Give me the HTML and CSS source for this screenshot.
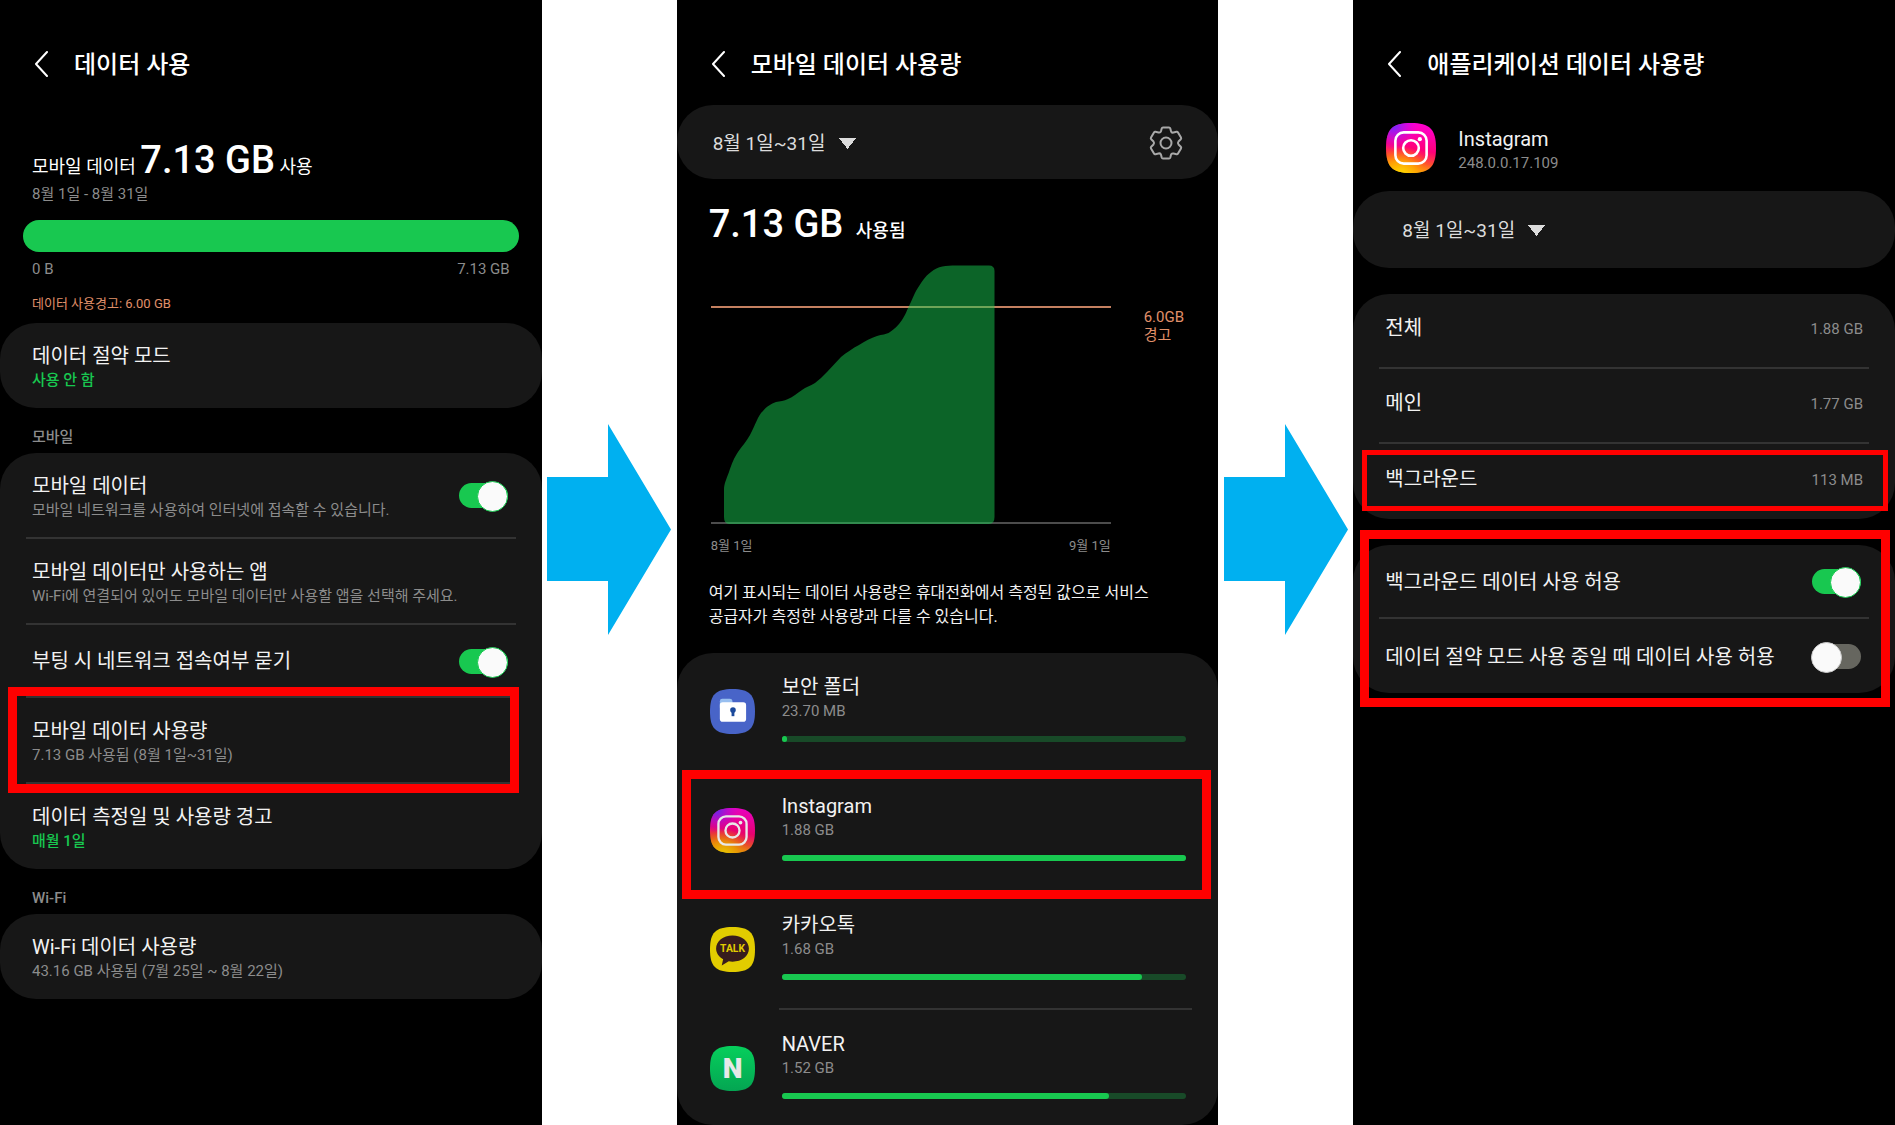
FILE: index.html
```html
<!DOCTYPE html>
<html lang="ko">
<head>
    <meta charset="UTF-8">
    <meta name="viewport" content="width=device-width, initial-scale=1.0">
    <title>데이터 사용</title>
    <link rel="stylesheet" href="styles.css">
</head>
<body>
    <!-- shared icons -->
    <svg class="defs" width="0" height="0" aria-hidden="true">
        <defs>
            <linearGradient id="insta-base" x1="0.6" y1="0" x2="0.4" y2="1">
                <stop offset="0" stop-color="#ff00d0"/>
                <stop offset="0.5" stop-color="#ff0078"/>
                <stop offset="0.75" stop-color="#ff5030"/>
                <stop offset="1" stop-color="#ffd000"/>
            </linearGradient>
            <radialGradient id="insta-purple" cx="0.15" cy="0.05" r="0.5">
                <stop offset="0" stop-color="#6a2cff"/>
                <stop offset="1" stop-color="#d800ff" stop-opacity="0"/>
            </radialGradient>
            <radialGradient id="insta-yellow" cx="0.3" cy="1.05" r="0.6">
                <stop offset="0" stop-color="#ffe000"/>
                <stop offset="0.5" stop-color="#ffa800" stop-opacity="0.8"/>
                <stop offset="1" stop-color="#ff6a00" stop-opacity="0"/>
            </radialGradient>
            <linearGradient id="naver-base" x1="0" y1="0" x2="0" y2="1">
                <stop offset="0" stop-color="#06cf5c"/>
                <stop offset="1" stop-color="#04a552"/>
            </linearGradient>
            <path id="squircle" d="M24 0C42 0 48 6 48 24S42 48 24 48 0 42 0 24 6 0 24 0Z"/>
        </defs>
        <symbol id="icon-back" viewBox="0 0 14 26">
            <path d="M13 1 2 13l11 12" fill="none" stroke="#fff" stroke-width="2" stroke-linecap="round" stroke-linejoin="round"/>
        </symbol>
        <symbol id="icon-insta" viewBox="0 0 48 48">
            <use href="#squircle" fill="url(#insta-base)"/>
            <use href="#squircle" fill="url(#insta-yellow)"/>
            <use href="#squircle" fill="url(#insta-purple)"/>
            <g fill="none" stroke="#fff" stroke-width="2.500">
                <rect x="9" y="9" width="30" height="30" rx="8"/>
                <circle cx="24" cy="24" r="7.500"/>
            </g>
            <circle cx="32.5" cy="15.5" r="2" fill="#fff"/>
        </symbol>
        <symbol id="icon-arrow" viewBox="0 0 124 211">
            <path d="M0 53H61V0L124 105.500 61 211V157H0Z" fill="#00b0f0"/>
        </symbol>
    </svg>

    <main class="steps">
        <section class="phone">
            <header class="top">
                <button class="back" aria-label="뒤로"><svg><use href="#icon-back"/></svg></button>
                <h1>데이터 사용</h1>
            </header>

            <div class="summary">
                <p class="total">모바일 데이터 <strong>7.13 GB</strong> 사용</p>
                <p class="sub">8월 1일 - 8월 31일</p>
                <div class="usage-bar"></div>
                <p class="scale sub"><span>0 B</span><span>7.13 GB</span></p>
                <p class="warning">데이터 사용경고: 6.00 GB</p>
            </div>

            <div class="card">
                <div class="row">
                    <div>
                        <h3>데이터 절약 모드</h3>
                        <p class="sub green">사용 안 함</p>
                    </div>
                </div>
            </div>

            <h2>모바일</h2>
            <div class="card">
                <div class="row">
                    <div>
                        <h3><label for="mobile-data">모바일 데이터</label></h3>
                        <p class="sub">모바일 네트워크를 사용하여 인터넷에 접속할 수 있습니다.</p>
                    </div>
                    <input type="checkbox" class="toggle" id="mobile-data" checked>
                </div>
                <div class="row">
                    <div>
                        <h3>모바일 데이터만 사용하는 앱</h3>
                        <p class="sub">Wi-Fi에 연결되어 있어도 모바일 데이터만 사용할 앱을 선택해 주세요.</p>
                    </div>
                </div>
                <div class="row single">
                    <h3><label for="boot-ask">부팅 시 네트워크 접속여부 묻기</label></h3>
                    <input type="checkbox" class="toggle" id="boot-ask" checked>
                </div>
                <div class="row mark mark-usage">
                    <div>
                        <h3>모바일 데이터 사용량</h3>
                        <p class="sub">7.13 GB 사용됨 (8월 1일~31일)</p>
                    </div>
                </div>
                <div class="row">
                    <div>
                        <h3>데이터 측정일 및 사용량 경고</h3>
                        <p class="sub green">매월 1일</p>
                    </div>
                </div>
            </div>

            <h2>Wi-Fi</h2>
            <div class="card">
                <div class="row">
                    <div>
                        <h3>Wi-Fi 데이터 사용량</h3>
                        <p class="sub">43.16 GB 사용됨 (7월 25일 ~ 8월 22일)</p>
                    </div>
                </div>
            </div>
        </section>

        <div class="next"><svg><use href="#icon-arrow"/></svg></div>

        <section class="phone">
            <header class="top">
                <button class="back" aria-label="뒤로"><svg><use href="#icon-back"/></svg></button>
                <h1>모바일 데이터 사용량</h1>
            </header>

            <div class="card period">
                <select aria-label="기간">
                    <option>8월 1일~31일</option>
                </select>
                <button class="settings" aria-label="설정">
                    <svg viewBox="-17 -17 34 34" fill="none" stroke="#a8a8a8" stroke-width="2" stroke-linejoin="round">
                        <path d="M-3-15.500H3Q4-15.500 4.300-14.500L5-11.800Q5.500-10 7.500-10.500L10.500-11.300Q11.500-11.500 12-10.600L15-5.400Q15.500-4.500 14.800-3.800L12.500-1.500Q11.300 0 12.500 1.500L14.800 3.800Q15.500 4.500 15 5.400L12 10.600Q11.500 11.500 10.500 11.300L7.500 10.500Q5.500 10 5 11.800L4.300 14.500Q4 15.500 3 15.500H-3Q-4 15.500-4.300 14.500L-5 11.800Q-5.500 10-7.500 10.500L-10.500 11.300Q-11.500 11.500-12 10.600L-15 5.400Q-15.500 4.500-14.800 3.800L-12.500 1.500Q-11.300 0-12.500-1.500L-14.800-3.800Q-15.500-4.500-15-5.400L-12-10.600Q-11.500-11.500-10.500-11.300L-7.500-10.500Q-5.500-10-5-11.800L-4.300-14.500Q-4-15.500-3-15.500Z"/>
                        <circle r="5.500"/>
                    </svg>
                </button>
            </div>

            <p class="total used"><strong>7.13 GB</strong> <b>사용됨</b></p>

            <div class="chart">
                <div class="plot">
                    <svg viewBox="0 0 400 260" preserveAspectRatio="none">
                        <path d="M0 42H400" stroke="#c48060" stroke-width="2"/>
                        <path d="M0 258H400" stroke="#666" stroke-width="1.500"/>
                        <path fill="#18c850" fill-opacity="0.5" d="M13 225C13 219 15 215 18 207C21 198 23 193 27 187C31 181 35 177 39 170C44 161 47 150 52 146C56 141 60 139 65 137C69 136 73 136 77 134C82 132 86 128 91 125C95 122 99 121 104 118C108 115 112 111 116 107L130 92C135 88 142 83 148 80C154 76 160 73 166 71C171 69 175 70 179 67C183 64 187 61 191 55C195 49 196 45 198 41C201 35 202 32 205 26C210 18 214 11 220 7C227 1 235 0.500 245 0.500H278Q283.500 0.500 283.500 6V252Q283.500 259 278 259H18Q13 259 13 252Z"/>
                    </svg>
                    <p class="axis"><span>8월 1일</span><span>9월 1일</span></p>
                </div>
                <p class="limit">6.0GB<br>경고</p>
            </div>

            <p class="note">여기 표시되는 데이터 사용량은 휴대전화에서 측정된 값으로 서비스<br>공급자가 측정한 사용량과 다를 수 있습니다.</p>

            <ul class="card apps">
                <li class="app">
                    <svg class="app-icon" viewBox="0 0 48 48">
                        <use href="#squircle" fill="#4864c8"/>
                        <path d="M10.500 20V13Q10.500 10.500 13 10.500H21Q24 10.500 24 14V20Z" fill="#98bff0"/>
                        <rect x="10.500" y="14" width="28" height="21" rx="3" fill="#fff"/>
                        <circle cx="24.500" cy="22.500" r="3" fill="#1c4a9c"/>
                        <path d="M23 23H26V29H23Z" fill="#1c4a9c"/>
                    </svg>
                    <div class="app-body">
                        <h3>보안 폴더</h3>
                        <p class="sub">23.70 MB</p>
                        <div class="bar"><div style="width: 1.2%"></div></div>
                    </div>
                </li>
                <li class="app mark mark-app">
                    <svg class="app-icon dim"><use href="#icon-insta"/></svg>
                    <div class="app-body">
                        <h3>Instagram</h3>
                        <p class="sub">1.88 GB</p>
                        <div class="bar"><div style="width: 100%"></div></div>
                    </div>
                </li>
                <li class="app">
                    <svg class="app-icon" viewBox="0 0 48 48">
                        <use href="#squircle" fill="#e2cc00"/>
                        <path d="M24 9C14 9 6.500 15 6.500 23C6.500 28 9.500 32 14 34.500L12.500 41L20 36.500Q22 37 24 37C34 37 41.500 31 41.500 23S34 9 24 9Z" fill="#371c1d"/>
                        <text class="talk" x="24" y="26.500">TALK</text>
                    </svg>
                    <div class="app-body">
                        <h3>카카오톡</h3>
                        <p class="sub">1.68 GB</p>
                        <div class="bar"><div style="width: 89%"></div></div>
                    </div>
                </li>
                <li class="app">
                    <svg class="app-icon" viewBox="0 0 48 48">
                        <use href="#squircle" fill="url(#naver-base)"/>
                        <text class="naver" x="24" y="34.500">N</text>
                    </svg>
                    <div class="app-body">
                        <h3>NAVER</h3>
                        <p class="sub">1.52 GB</p>
                        <div class="bar"><div style="width: 81%"></div></div>
                    </div>
                </li>
            </ul>
        </section>

        <div class="next"><svg><use href="#icon-arrow"/></svg></div>

        <section class="phone">
            <header class="top">
                <button class="back" aria-label="뒤로"><svg><use href="#icon-back"/></svg></button>
                <h1>애플리케이션 데이터 사용량</h1>
            </header>

            <div class="app-info">
                <svg class="app-icon large"><use href="#icon-insta"/></svg>
                <div>
                    <h3>Instagram</h3>
                    <p class="sub">248.0.0.17.109</p>
                </div>
            </div>

            <div class="card period inset">
                <select aria-label="기간">
                    <option>8월 1일~31일</option>
                </select>
            </div>

            <dl class="card values">
                <div class="row single"><dt>전체</dt><dd>1.88 GB</dd></div>
                <div class="row single"><dt>메인</dt><dd>1.77 GB</dd></div>
                <div class="row single mark mark-value"><dt>백그라운드</dt><dd>113 MB</dd></div>
            </dl>

            <div class="card options mark mark-card">
                <div class="row single">
                    <h3><label for="bg-data">백그라운드 데이터 사용 허용</label></h3>
                    <input type="checkbox" class="toggle" id="bg-data" checked>
                </div>
                <div class="row single">
                    <h3><label for="saver-data">데이터 절약 모드 사용 중일 때 데이터 사용 허용</label></h3>
                    <input type="checkbox" class="toggle" id="saver-data">
                </div>
            </div>
        </section>
    </main>
</body>
</html>
```
FILE: styles.css
```css
:root {
    --green: #18c850;
    --card: #171717;
    --line: #333;
    --muted: #8c8c8c;
    --text: #f2f2f2;
    --orange: #e0906a;
    --mark: #ff0000;
}

* {
    box-sizing: border-box;
    margin: 0;
    padding: 0;
}

body {
    font-family: Roboto, "Noto Sans CJK KR", sans-serif;
    font-size: 16px;
    line-height: 24px;
    color: var(--text);
    background: #fff;
}

button, select {
    font: inherit;
    color: inherit;
    background: none;
    border: none;
}

.defs {
    position: absolute;
}

.steps {
    display: grid;
    grid-template-columns: 1fr 135px 1fr 135px 1fr;
    min-height: 100vh;
}

.phone {
    background: #000;
    min-width: 0;
}

.next {
    padding-top: 424px;
    text-align: center;
}

.next svg {
    width: 124px;
    height: 211px;
}

/* header */
.top {
    display: flex;
    align-items: center;
    gap: 26px;
    height: 105px;
    padding: 22px 34px 0;
}

.back, .back svg {
    display: block;
    width: 14px;
    height: 26px;
}

h1 {
    padding-top: 2px;
    font-size: 24px;
    font-weight: 500;
    line-height: 32px;
    color: #fff;
}

h2 {
    padding: 18px 32px 5px;
    font-size: 15px;
    font-weight: 500;
    line-height: 22px;
    color: var(--muted);
}

h3, dt {
    font-size: 20px;
    font-weight: 400;
    line-height: 26px;
}

.sub, dd {
    font-size: 15px;
    line-height: 22px;
    color: var(--muted);
}

.green {
    font-weight: 500;
    color: var(--green);
}

/* total usage */
.summary {
    padding: 39px 23px 8px;
}

.summary p {
    padding: 0 9px;
}

.total {
    font-size: 18px;
    line-height: 32px;
    color: #fff;
}

.total strong {
    font-size: 38px;
    font-weight: 500;
}

.total b {
    font-weight: 500;
}

.usage-bar {
    height: 32px;
    margin: 15px 0 6px;
    border-radius: 16px;
    background: var(--green);
}

.scale {
    display: flex;
    justify-content: space-between;
}

.warning {
    margin-top: 13px;
    font-size: 13px;
    line-height: 22px;
    color: var(--orange);
}

/* cards */
.card {
    border-radius: 36px;
    background: var(--card);
}

.row {
    display: flex;
    justify-content: space-between;
    align-items: center;
    height: 86px;
    margin: 0 26px;
    padding: 1px 6px 0;
    border-bottom: 2px solid var(--line);
}

.row div h3 {
    padding-top: 2px;
}

.row.single {
    height: 73px;
}

.row:last-child {
    height: 85px;
    border-bottom: none;
}

.toggle {
    appearance: none;
    position: relative;
    width: 49px;
    height: 25px;
    margin-right: 2px;
    border-radius: 13px;
    background: var(--green);
}

.toggle::after {
    content: "";
    position: absolute;
    top: -2px;
    right: 0;
    width: 29px;
    height: 29px;
    border: 1px solid var(--green);
    border-radius: 50%;
    background: #fafafa;
}

.toggle:not(:checked) {
    background: #66665f;
}

.toggle:not(:checked)::after {
    right: auto;
    left: -1px;
    border-color: #ccc;
}

/* period picker */
.period {
    display: flex;
    justify-content: space-between;
    align-items: center;
    height: 74px;
    padding: 2px 35px 0 36px;
}

.period.inset {
    height: 77px;
    padding: 2px 49px 0;
}

.period select {
    appearance: none;
    padding: 1px 30px 0 0;
    font-size: 19px;
    line-height: 26px;
    color: #dcdcdc;
    /* the dropdown triangle */
    background: conic-gradient(from -38deg at 50% 100%, #dcdcdc 76deg, transparent 0) no-repeat right center / 17px 11px;
}

.settings, .settings svg {
    display: block;
    width: 34px;
    height: 34px;
}

/* chart */
.used {
    padding: 29px 32px 18px;
}

.used b {
    margin-left: 8px;
}

.chart {
    display: flex;
    padding: 0 34px;
}

.plot {
    flex: 0 0 400px;
}

.plot svg {
    display: block;
    width: 100%;
    height: 260px;
}

.axis {
    display: flex;
    justify-content: space-between;
    margin-top: 10px;
    font-size: 13px;
    line-height: 22px;
    color: var(--muted);
}

.limit {
    padding: 43px 0 0 33px;
    font-size: 15px;
    line-height: 18px;
    color: var(--orange);
}

.note {
    padding: 24px 32px;
}

/* app list */
.apps {
    list-style: none;
}

.app {
    display: flex;
    align-items: flex-start;
    height: 119px;
    padding: 0 26px 0 33px;
}

.app:last-child {
    height: 115px;
}

.app-icon {
    flex: none;
    width: 45px;
    height: 45px;
    margin-top: 36px;
}

.app-icon.dim {
    opacity: 0.9;
}

.app-icon.large {
    width: 50px;
    height: 50px;
    margin-top: 0;
}

.app-body {
    flex: 1;
    height: 100%;
    margin-left: 24px;
    padding: 21px 6px 0 3px;
    border-bottom: 2px solid var(--line);
}

.mark-app .app-body, .app:last-child .app-body {
    border-bottom: none;
}

.bar {
    height: 6px;
    margin-top: 14px;
    border-radius: 3px;
    background: #184a28;
}

.bar div {
    height: 100%;
    border-radius: 3px;
    background: var(--green);
}

.talk {
    font-size: 11px;
    font-weight: 700;
    text-anchor: middle;
    fill: #e2cc00;
}

.naver {
    font-size: 30px;
    font-weight: 900;
    text-anchor: middle;
    fill: #e8e8e8;
}

/* app detail */
.app-info {
    display: flex;
    align-items: center;
    gap: 22px;
    padding: 17px 33px;
}

.app-info h3 {
    padding-top: 4px;
}

.values {
    margin: 26px 0;
}

.values .row {
    height: 75px;
    padding-bottom: 6px;
}

.options .row {
    height: 74px;
}

dd {
    padding-top: 2px;
}

/* red highlight boxes */
.mark {
    position: relative;
}

.mark::after {
    content: "";
    position: absolute;
    border: 9px solid var(--mark);
    pointer-events: none;
}

.mark-usage::after {
    inset: -11px -3px -11px -18px;
}

.mark-app::after {
    inset: -2px 7px -8px 5px;
}

.mark-value::after {
    inset: 6px -19px 8px -17px;
    border-width: 5px;
}

.mark-card::after {
    inset: -15px 5px -14px 7px;
}
```
